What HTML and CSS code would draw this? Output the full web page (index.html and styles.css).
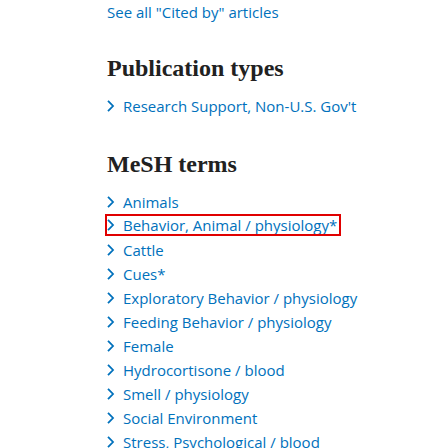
FILE: index.html
```html
<!DOCTYPE html>
<html>
<head>
<meta charset="utf-8">
<link rel="stylesheet" href="styles.css">
</head>
<body>
<div class="page">
  <a class="see-all" href="#">See all "Cited by" articles</a>
  <section class="block">
    <h2 class="heading">Publication types</h2>
    <ul class="terms">
      <li class="term"><span class="chev"><svg width="8" height="12" viewBox="0 0 8 12"><path d="M1 0.8 L6 6 L1 11.2" fill="none" stroke="currentColor" stroke-width="1.8"/></svg></span><a href="#">Research Support, Non-U.S. Gov't</a></li>
    </ul>
  </section>
  <section class="block">
    <h2 class="heading">MeSH terms</h2>
    <ul class="terms">
      <li class="term"><span class="chev"><svg width="8" height="12" viewBox="0 0 8 12"><path d="M1 0.8 L6 6 L1 11.2" fill="none" stroke="currentColor" stroke-width="1.8"/></svg></span><a href="#">Animals</a></li>
      <li class="term focused"><span class="chev"><svg width="8" height="12" viewBox="0 0 8 12"><path d="M1 0.8 L6 6 L1 11.2" fill="none" stroke="currentColor" stroke-width="1.8"/></svg></span><a href="#">Behavior, Animal / physiology*</a></li>
      <li class="term"><span class="chev"><svg width="8" height="12" viewBox="0 0 8 12"><path d="M1 0.8 L6 6 L1 11.2" fill="none" stroke="currentColor" stroke-width="1.8"/></svg></span><a href="#">Cattle</a></li>
      <li class="term"><span class="chev"><svg width="8" height="12" viewBox="0 0 8 12"><path d="M1 0.8 L6 6 L1 11.2" fill="none" stroke="currentColor" stroke-width="1.8"/></svg></span><a href="#">Cues*</a></li>
      <li class="term"><span class="chev"><svg width="8" height="12" viewBox="0 0 8 12"><path d="M1 0.8 L6 6 L1 11.2" fill="none" stroke="currentColor" stroke-width="1.8"/></svg></span><a href="#">Exploratory Behavior / physiology</a></li>
      <li class="term"><span class="chev"><svg width="8" height="12" viewBox="0 0 8 12"><path d="M1 0.8 L6 6 L1 11.2" fill="none" stroke="currentColor" stroke-width="1.8"/></svg></span><a href="#">Feeding Behavior / physiology</a></li>
      <li class="term"><span class="chev"><svg width="8" height="12" viewBox="0 0 8 12"><path d="M1 0.8 L6 6 L1 11.2" fill="none" stroke="currentColor" stroke-width="1.8"/></svg></span><a href="#">Female</a></li>
      <li class="term"><span class="chev"><svg width="8" height="12" viewBox="0 0 8 12"><path d="M1 0.8 L6 6 L1 11.2" fill="none" stroke="currentColor" stroke-width="1.8"/></svg></span><a href="#">Hydrocortisone / blood</a></li>
      <li class="term"><span class="chev"><svg width="8" height="12" viewBox="0 0 8 12"><path d="M1 0.8 L6 6 L1 11.2" fill="none" stroke="currentColor" stroke-width="1.8"/></svg></span><a href="#">Smell / physiology</a></li>
      <li class="term"><span class="chev"><svg width="8" height="12" viewBox="0 0 8 12"><path d="M1 0.8 L6 6 L1 11.2" fill="none" stroke="currentColor" stroke-width="1.8"/></svg></span><a href="#">Social Environment</a></li>
      <li class="term"><span class="chev"><svg width="8" height="12" viewBox="0 0 8 12"><path d="M1 0.8 L6 6 L1 11.2" fill="none" stroke="currentColor" stroke-width="1.8"/></svg></span><a href="#">Stress, Psychological / blood</a></li>
    </ul>
  </section>
</div>
</body>
</html>
```

FILE: styles.css
```css
html, body {
  margin: 0;
  padding: 0;
  background: #fff;
  overflow: hidden;
}
.page {
  padding: 2px 0 0 107px;
  font-family: "Open Sans", "Noto Sans", sans-serif;
  font-size: 15px;
  color: #0071bc;
}
a {
  color: #0071bc;
  text-decoration: none;
}
.see-all {
  display: block;
  line-height: 20px;
}
.block {
  margin-top: 32px;
}
.heading {
  margin: 0 0 12px 0;
  font-family: "Liberation Serif", "Times New Roman", serif;
  font-weight: bold;
  font-size: 24px;
  line-height: 28px;
  color: #212121;
}
.terms {
  list-style: none;
  margin: 0;
  padding: 0;
}
.term {
  display: flex;
  align-items: center;
  height: 24px;
  width: max-content;
}
.chev {
  display: flex;
  width: 16px;
  color: #0071bc;
}
.focused {
  outline: 2px solid #e00000;
  height: 18px;
  margin: 2px 0 4px 0;
  padding-right: 2px;
}
```
